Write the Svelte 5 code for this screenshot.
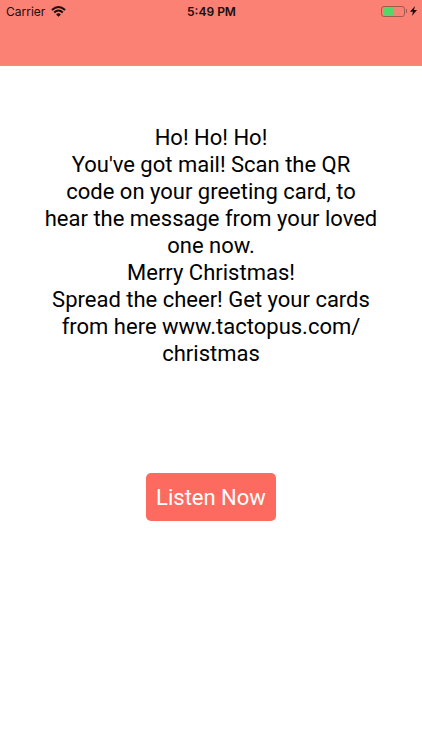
<script>
let carrier = "Carrier";
let time = "5:49 PM";
let battery = 57;

let lines = [
    "Ho! Ho! Ho!",
    "You've got mail! Scan the QR",
    "code on your greeting card, to",
    "hear the message from your loved",
    "one now.",
    "Merry Christmas!",
    "Spread the cheer! Get your cards",
    "from here www.tactopus.com/",
    "christmas"
];
</script>

<div class="screen">
    <header>
        <div class="statusbar">
            <div class="network">
                <span>{carrier}</span>
                <svg width="15" height="11" viewBox="0 0 15 11" aria-hidden="true">
                    <path d="M0.9 4.1 Q7.5 -2 14.1 4.1" fill="none" stroke="#190d0c" stroke-width="2" />
                    <path d="M3.2 6.5 Q7.5 2.6 11.8 6.5" fill="none" stroke="#190d0c" stroke-width="2" />
                    <path d="M5.1 8.4 Q7.5 6.3 9.9 8.4 L7.5 10.8 Z" fill="#190d0c" />
                </svg>
            </div>
            <span class="time">{time}</span>
            <div class="power">
                <div class="battery">
                    <div class="level" style="width: {battery}%"></div>
                </div>
                <div class="tip"></div>
                <svg width="7" height="10" viewBox="0 0 6 10" preserveAspectRatio="none" aria-hidden="true">
                    <path d="M4.3 0 L0 5.7 H2.6 L1.6 10 L6 4.1 H3.4 Z" fill="#190d0c" />
                </svg>
            </div>
        </div>
    </header>

    <main>
        <p class="message">
            {#each lines as line}
                {line}<br>
            {/each}
        </p>
        <button class="listen" type="button">Listen Now</button>
    </main>
</div>

<style>
    :global(body) {
        margin: 0;
        background: #ffffff;
    }

    .screen {
        font-family: Inter, "Liberation Sans", sans-serif;
        color: #000000;
    }

    header {
        height: 66px;
        box-sizing: border-box;
        background: #fb8175;
        border-bottom: 1px solid #ee8d83;
    }

    .statusbar {
        display: grid;
        grid-template-columns: 1fr auto 1fr;
        align-items: center;
        height: 22px;
        padding: 0 5px 0 6px;
        font-size: 12px;
        color: #190d0c;
    }

    .network {
        display: flex;
        align-items: center;
        gap: 6px;
    }

    .time {
        font-weight: 600;
    }

    .power {
        display: flex;
        align-items: center;
        justify-content: flex-end;
    }

    .battery {
        width: 24px;
        height: 11px;
        box-sizing: border-box;
        padding: 1px;
        border: 1px solid #a35850;
        border-radius: 3px;
    }

    .level {
        height: 100%;
        background: #53d769;
        border-radius: 1px;
    }

    .tip {
        width: 1px;
        height: 4px;
        margin: 0 3px 0 1px;
        background: #a35850;
    }

    main {
        display: flex;
        flex-direction: column;
        align-items: center;
        gap: 106px;
        padding-top: 58px;
    }

    .message,
    .listen {
        font-family: Roboto, "Liberation Sans", sans-serif;
        font-size: 22px;
    }

    .message {
        margin: 0;
        line-height: 27px;
        text-align: center;
    }

    .listen {
        height: 48px;
        padding: 0 10px;
        border: 0;
        border-radius: 5px;
        background: #fd6b60;
        color: #ffffff;
        cursor: pointer;
    }
</style>
